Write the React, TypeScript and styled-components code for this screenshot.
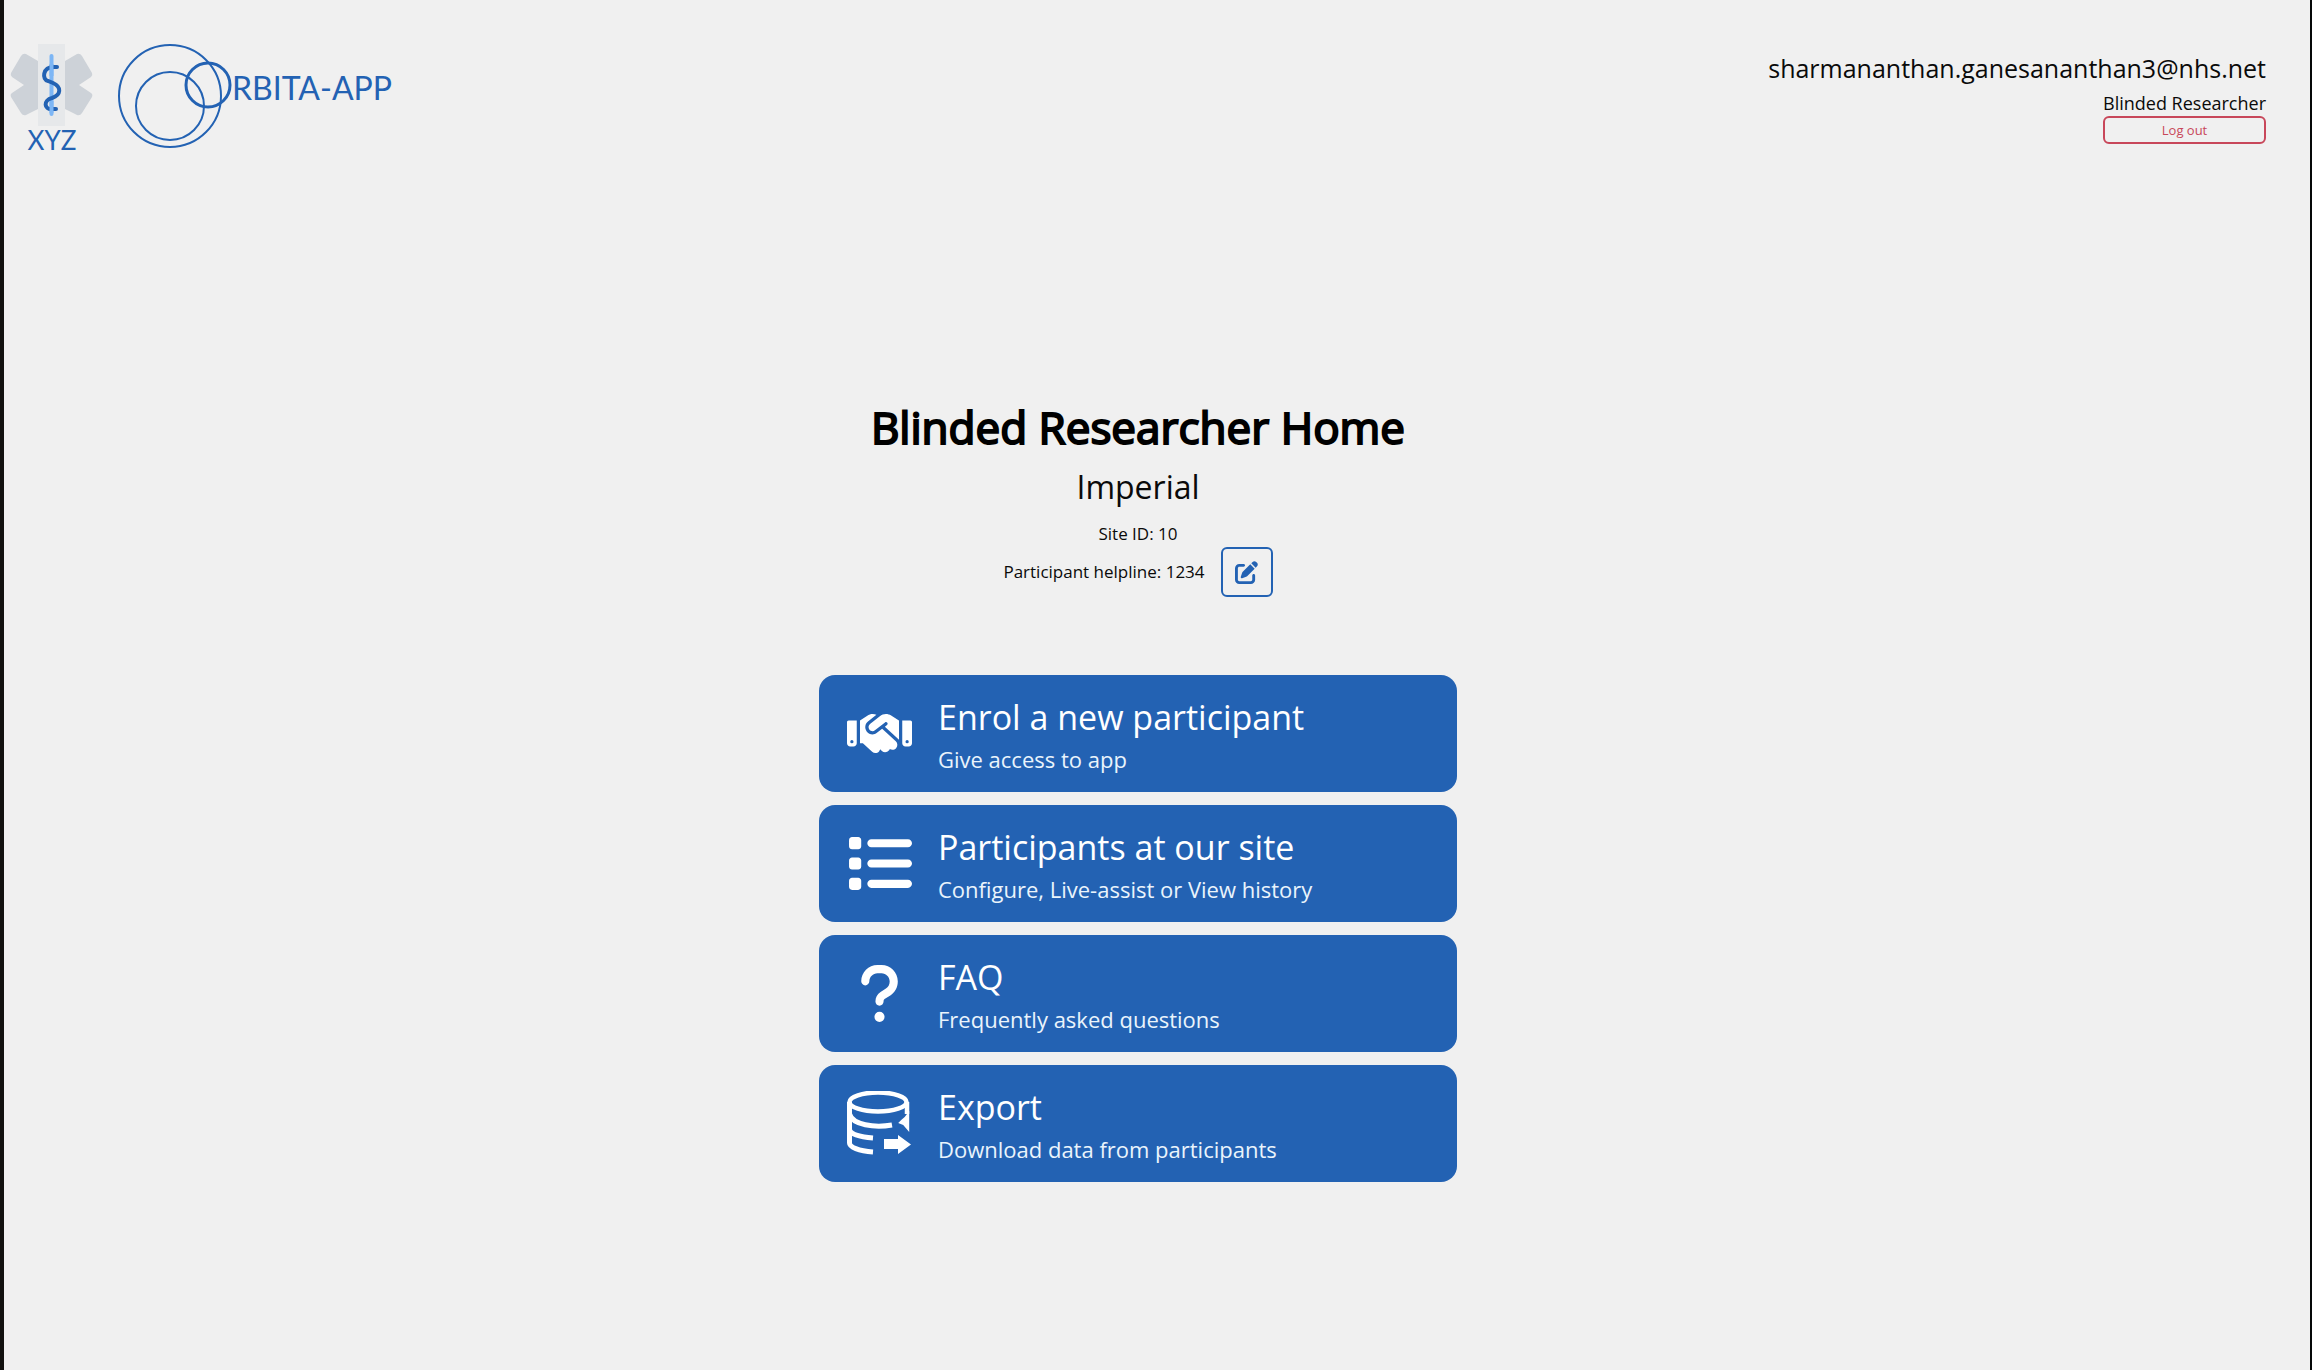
import React from 'react';
import styled, { createGlobalStyle } from 'styled-components';
import { FaHandshake, FaList, FaQuestion, FaPenToSquare } from 'react-icons/fa6';
import type { ReactNode } from 'react';

const blue = '#2362b3';
const red = '#c8475a';

const GlobalStyle = createGlobalStyle`
  *, *::before, *::after { box-sizing: border-box; }
  body {
    margin: 0;
    background: #f0f0f0;
    color: #0a0a0a;
    font-family: "Open Sans", "Noto Sans", sans-serif;
  }
`;

const Page = styled.div`
  min-height: 100vh;
  border-left: 4px solid #12110f;
  border-right: 2px solid #050808;
  background: #f0f0f0;
`;

const Header = styled.header`
  display: flex;
  justify-content: space-between;
  align-items: flex-start;
  padding: 44px 44px 0 6px;
`;

const Brand = styled.div`
  display: flex;
  align-items: flex-start;
  gap: 24px;
  font-family: Lato, "Open Sans", sans-serif;
  color: ${blue};
`;

const Emblem = styled.div`
  display: flex;
  flex-direction: column;
  align-items: center;
  font-size: 26px;
  line-height: 28px;
`;

const Wordmark = styled.div`
  display: flex;
  align-items: flex-start;
  font-size: 32px;
  line-height: 88px;
`;

const Account = styled.div`
  display: grid;
  justify-items: end;
`;

const Email = styled.div`
  font-size: 25px;
  line-height: 48px;
`;

const RoleBox = styled.div`
  display: grid;
`;

const Role = styled.span`
  padding-bottom: 2px;
  font-size: 18px;
  line-height: 22px;
`;

const LogOut = styled.button`
  height: 28px;
  padding: 0;
  border: 2px solid ${red};
  border-radius: 6px;
  background: transparent;
  color: ${red};
  font-family: inherit;
  font-size: 13px;
  line-height: 24px;
`;

const Main = styled.main`
  display: flex;
  flex-direction: column;
  align-items: center;
  padding: 237px 38px 0 0;
`;

const Title = styled.h1`
  margin: 0;
  color: #000;
  font-size: 44px;
  font-weight: 400;
  line-height: 72px;
  -webkit-text-stroke: 2px #000;
`;

const Site = styled.h2`
  margin: 0 0 10px;
  font-size: 32px;
  font-weight: 400;
  line-height: 48px;
`;

const Detail = styled.p`
  margin: 0;
  font-size: 17px;
  line-height: 26px;
`;

const Helpline = styled.div`
  display: flex;
  align-items: center;
  gap: 16px;
`;

const EditButton = styled.button`
  display: grid;
  place-items: center;
  width: 52px;
  height: 50px;
  padding: 0;
  border: 2px solid ${blue};
  border-radius: 6px;
  background: transparent;
  color: ${blue};
  font-size: 23px;
`;

const Menu = styled.nav`
  display: grid;
  gap: 13px;
  width: 100%;
  max-width: 638px;
  margin-top: 78px;
`;

const Card = styled.button`
  display: flex;
  align-items: center;
  gap: 26px;
  height: 117px;
  padding: 0 28px;
  border: 0;
  border-radius: 16px;
  background: ${blue};
  color: #fff;
  font-family: inherit;
  text-align: left;
  svg { width: 65px; height: 65px; flex: none; }
`;

const CardText = styled.span`
  display: grid;
  padding-top: 3px;
`;

const CardTitle = styled.span`
  font-size: 34px;
  line-height: 48px;
`;

const CardNote = styled.span`
  color: #eaf4fc;
  font-size: 22px;
  line-height: 36px;
`;

const MedicalIcon = () => (
  <svg width="84" height="82" viewBox="0 0 84 82" aria-hidden="true">
    <rect x="28" y="0" width="27" height="82" fill="#e6e8ea" />
    <path d="M28 17v48l-12 6q-3 1-5-2L1 53q-1-3 1-4l12-8L2 33q-2-2-1-4l10-17q2-3 5-2z" fill="#cdd2d8" />
    <path d="M55 17v48l12 6q3 1 5-2l10-16q1-3-1-4l-12-8 12-8q2-2 1-4L72 12q-2-3-5-2z" fill="#cdd2d8" />
    <path d="M41.500 12v58" stroke="#7db6f5" strokeWidth="4" strokeLinecap="round" />
    <path d="M47 23h-3C32 23 32 36 38 37l5 2c9 4 8 12-1 15-9 2-8 12 0 11h4" fill="none" stroke={blue} strokeWidth="4" strokeLinecap="round" />
    <path d="M41.500 20v12M41.500 57v12" stroke="#7db6f5" strokeWidth="4" />
  </svg>
);

const OrbitIcon = () => (
  <svg width="114" height="106" viewBox="0 0 114 106" fill="none" stroke={blue} aria-hidden="true">
    <circle cx="52" cy="52" r="51" strokeWidth="2" />
    <circle cx="52" cy="62" r="34" strokeWidth="2" />
    <circle cx="90" cy="41" r="22" strokeWidth="3" />
  </svg>
);

const ExportIcon = () => (
  <svg viewBox="0 0 65 65" fill="none" stroke="currentColor" strokeWidth="5" aria-hidden="true">
    <ellipse cx="31" cy="11" rx="28.500" ry="9.500" strokeWidth="4.500" />
    <path d="M2.500 11v41c0 4 9 8 23.500 9" />
    <path d="M2.500 23c3 11 25 14 42.500 11M2.500 39c2 5 11 7 23.500 8" />
    <path d="M60 11v12" strokeWidth="4.500" />
    <path d="M62.200 20v21l-6-7-5-2 3-3 3.500-3z" fill="currentColor" stroke="none" />
    <path d="M37 48h14v-4l13 9.500-13 9.500v-5H37z" fill="currentColor" stroke="none" />
  </svg>
);

const entries: { icon: ReactNode; title: string; note: string }[] = [
  { icon: <FaHandshake />, title: 'Enrol a new participant', note: 'Give access to app' },
  { icon: <FaList />, title: 'Participants at our site', note: 'Configure, Live-assist or View history' },
  { icon: <FaQuestion />, title: 'FAQ', note: 'Frequently asked questions' },
  { icon: <ExportIcon />, title: 'Export', note: 'Download data from participants' },
];

export default function App() {
  return (
    <Page>
      <GlobalStyle />
      <Header>
        <Brand>
          <Emblem><MedicalIcon />XYZ</Emblem>
          <Wordmark><OrbitIcon />RBITA-APP</Wordmark>
        </Brand>
        <Account>
          <Email>sharmananthan.ganesananthan3@nhs.net</Email>
          <RoleBox>
            <Role>Blinded Researcher</Role>
            <LogOut type="button">Log out</LogOut>
          </RoleBox>
        </Account>
      </Header>
      <Main>
        <Title>Blinded Researcher Home</Title>
        <Site>Imperial</Site>
        <Detail>Site ID: 10</Detail>
        <Helpline>
          <Detail>Participant helpline: 1234</Detail>
          <EditButton type="button" aria-label="Edit helpline"><FaPenToSquare /></EditButton>
        </Helpline>
        <Menu>
          {entries.map((entry) => (
            <Card type="button" key={entry.title}>
              {entry.icon}
              <CardText>
                <CardTitle>{entry.title}</CardTitle>
                <CardNote>{entry.note}</CardNote>
              </CardText>
            </Card>
          ))}
        </Menu>
      </Main>
    </Page>
  );
}
